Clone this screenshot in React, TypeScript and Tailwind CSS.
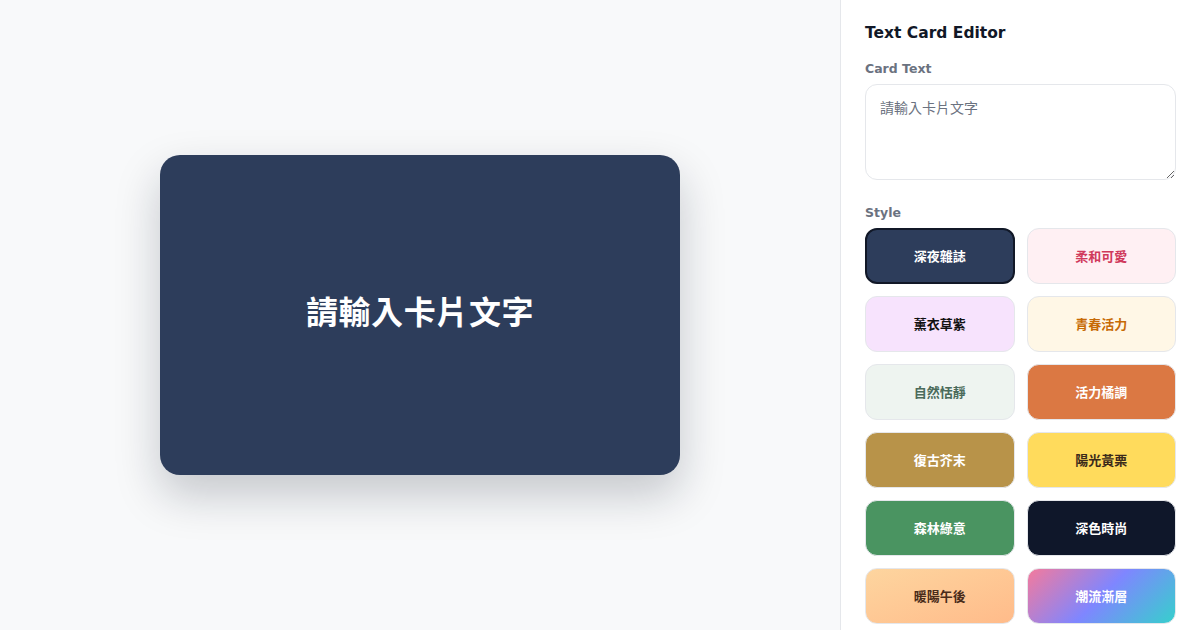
import React from "react";

const styles: { name: string; cls: string; selected?: boolean }[] = [
  { name: "深夜雜誌", cls: "bg-[#2d3d5b] text-white border-2 border-[#111827]", selected: true },
  { name: "柔和可愛", cls: "bg-[#fff0f3] text-[#d03a5c] border border-[#e5e7eb]" },
  { name: "薰衣草紫", cls: "bg-[#f7e3fd] text-[#111111] border border-[#e5e7eb]" },
  { name: "青春活力", cls: "bg-[#fff7e6] text-[#c76a05] border border-[#e5e7eb]" },
  { name: "自然恬靜", cls: "bg-[#eef4f0] text-[#4b6b5b] border border-[#e5e7eb]" },
  { name: "活力橘調", cls: "bg-[#db7843] text-white border border-[#e5e7eb]" },
  { name: "復古芥末", cls: "bg-[#b89349] text-white border border-[#e5e7eb]" },
  { name: "陽光黃栗", cls: "bg-[#ffdb5c] text-[#3b2a1a] border border-[#e5e7eb]" },
  { name: "森林綠意", cls: "bg-[#4a9461] text-white border border-[#e5e7eb]" },
  { name: "深色時尚", cls: "bg-[#0f172a] text-white border border-[#e5e7eb]" },
  { name: "暖陽午後", cls: "bg-gradient-to-br from-[#fdd59f] to-[#ffbb8a] text-[#4a2c1a] border border-[#e5e7eb]" },
  { name: "潮流漸層", cls: "bg-[linear-gradient(135deg,#f47a9c_0%,#7f86ff_50%,#36d0cc_100%)] text-white border border-[#e5e7eb]" },
];

export default function App() {
  return (
    <div
      className="flex w-[1200px] h-[630px] overflow-hidden"
      style={{ fontFamily: '"DejaVu Sans", "Noto Sans CJK TC", sans-serif' }}
    >
      <div className="flex-1 bg-[#f8f9fa] flex items-center justify-center">
        <div className="w-[520px] h-[320px] rounded-[20px] bg-[#2d3d5b] flex items-center justify-center pb-[10px] shadow-[0_20px_45px_rgba(15,23,42,0.22)]">
          <span
            className="text-white text-[32px] font-bold tracking-[0.6px]"
            style={{ fontFamily: '"Noto Sans CJK TC", sans-serif' }}
          >
            請輸入卡片文字
          </span>
        </div>
      </div>
      <div className="w-[360px] bg-white border-l border-[#e5e7eb] px-6 pt-[21px] flex flex-col">
        <h1 className="text-[15.5px] leading-6 font-bold text-[#111827]">Text Card Editor</h1>
        <label className="mt-[14px] text-[12.5px] leading-5 font-bold text-[#6b7280]">Card Text</label>
        <textarea
          className="mt-[5px] h-[96px] w-full rounded-xl border border-[#e5e7eb] px-[14px] py-[12px] text-[14px] leading-5 resize-y outline-none placeholder:text-[#6b7280]"
          placeholder="請輸入卡片文字"
          style={{ fontFamily: '"Noto Sans CJK TC", sans-serif' }}
        />
        <label className="mt-[23px] text-[12.5px] leading-5 font-bold text-[#6b7280]">Style</label>
        <div className="mt-[5px] grid grid-cols-2 gap-3">
          {styles.map((s) => (
            <button
              key={s.name}
              className={`h-[56px] rounded-xl flex items-center justify-center text-[13px] font-bold ${s.cls}`}
              style={{ fontFamily: '"Noto Sans CJK TC", sans-serif' }}
            >
              {s.name}
            </button>
          ))}
        </div>
      </div>
    </div>
  );
}
